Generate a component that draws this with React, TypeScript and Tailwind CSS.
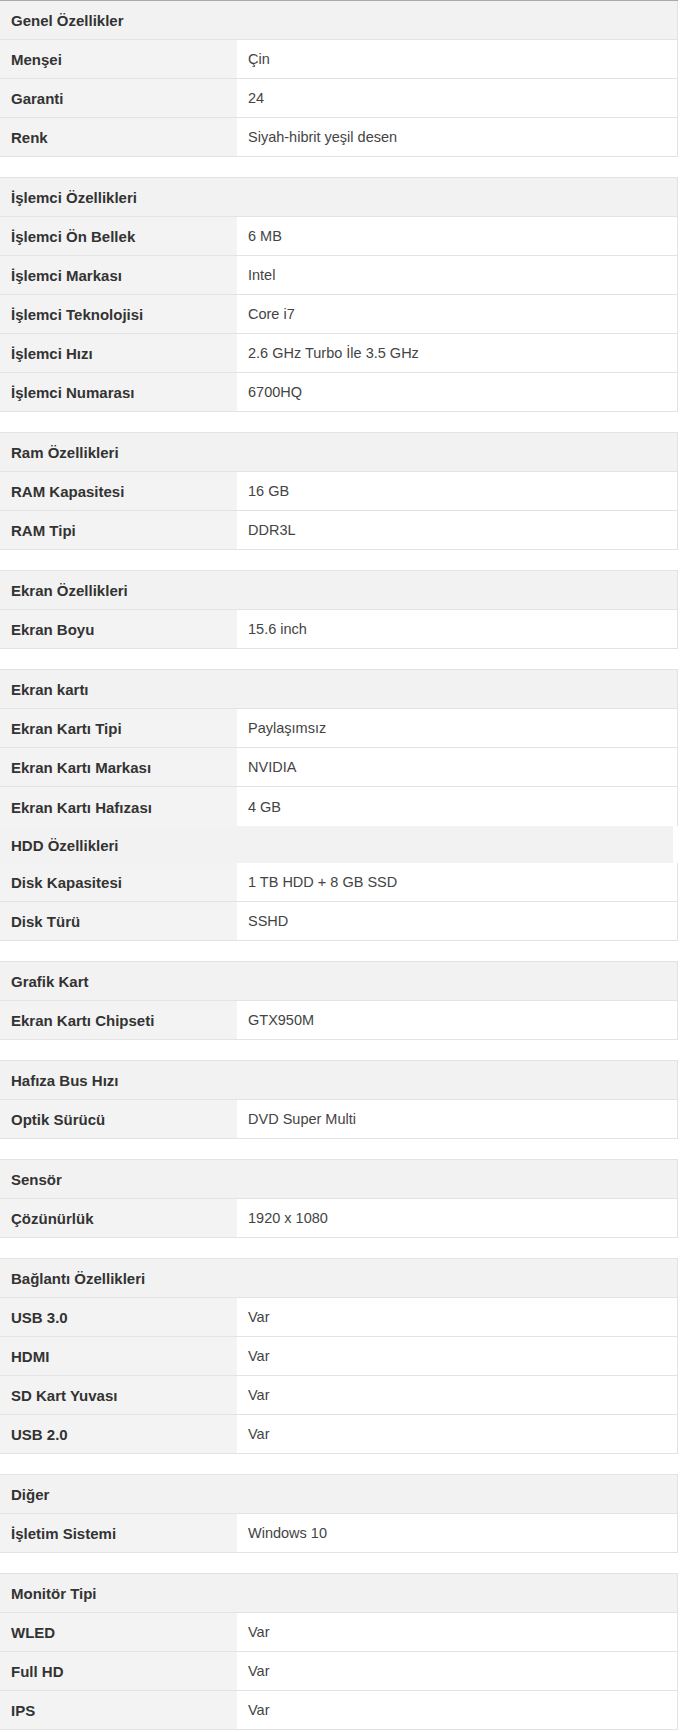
type Row = [string, string];

type Section = {
  title: string;
  rows: Row[];
  // continues directly under the previous section, no gap, no top border
  joined?: boolean;
};

const sections: Section[] = [
  {
    title: 'Genel Özellikler',
    rows: [
      ['Menşei', 'Çin'],
      ['Garanti', '24'],
      ['Renk', 'Siyah-hibrit yeşil desen'],
    ],
  },
  {
    title: 'İşlemci Özellikleri',
    rows: [
      ['İşlemci Ön Bellek', '6 MB'],
      ['İşlemci Markası', 'Intel'],
      ['İşlemci Teknolojisi', 'Core i7'],
      ['İşlemci Hızı', '2.6 GHz Turbo İle 3.5 GHz'],
      ['İşlemci Numarası', '6700HQ'],
    ],
  },
  {
    title: 'Ram Özellikleri',
    rows: [
      ['RAM Kapasitesi', '16 GB'],
      ['RAM Tipi', 'DDR3L'],
    ],
  },
  {
    title: 'Ekran Özellikleri',
    rows: [['Ekran Boyu', '15.6 inch']],
  },
  {
    title: 'Ekran kartı',
    rows: [
      ['Ekran Kartı Tipi', 'Paylaşımsız'],
      ['Ekran Kartı Markası', 'NVIDIA'],
      ['Ekran Kartı Hafızası', '4 GB'],
    ],
  },
  {
    title: 'HDD Özellikleri',
    joined: true,
    rows: [
      ['Disk Kapasitesi', '1 TB HDD + 8 GB SSD'],
      ['Disk Türü', 'SSHD'],
    ],
  },
  {
    title: 'Grafik Kart',
    rows: [['Ekran Kartı Chipseti', 'GTX950M']],
  },
  {
    title: 'Hafıza Bus Hızı',
    rows: [['Optik Sürücü', 'DVD Super Multi']],
  },
  {
    title: 'Sensör',
    rows: [['Çözünürlük', '1920 x 1080']],
  },
  {
    title: 'Bağlantı Özellikleri',
    rows: [
      ['USB 3.0', 'Var'],
      ['HDMI', 'Var'],
      ['SD Kart Yuvası', 'Var'],
      ['USB 2.0', 'Var'],
    ],
  },
  {
    title: 'Diğer',
    rows: [['İşletim Sistemi', 'Windows 10']],
  },
  {
    title: 'Monitör Tipi',
    rows: [
      ['WLED', 'Var'],
      ['Full HD', 'Var'],
      ['IPS', 'Var'],
    ],
  },
];

function SpecTable({ section, first, next }: { section: Section; first: boolean; next?: Section }) {
  const joinedBelow = next?.joined;
  const topBorder = section.joined ? '' : first ? 'border-t border-[#a9a9a9]' : 'border-t border-[#e3e3e3]';
  const spacing = joinedBelow ? '' : 'mb-[20px]';

  return (
    <div className={`w-[678px] ${topBorder} ${spacing}`}>
      <div
        className={`flex items-center pl-[11px] pt-[1px] font-bold text-[15px] text-[#333] bg-[#f2f2f2] ${
          section.joined ? 'h-[37px] w-[673px]' : 'h-[39px] border-b border-r border-[#e3e3e3]'
        }`}
      >
        {section.title}
      </div>
      {section.rows.map(([label, value], i) => {
        const last = i === section.rows.length - 1;
        const noBottom = last && joinedBelow;
        return (
          <div
            key={label}
            className={`flex h-[39px] border-r border-[#e3e3e3] ${noBottom ? 'h-[38px]' : 'border-b'}`}
          >
            <div className="flex w-[237px] shrink-0 items-center bg-[#f3f3f3] pl-[11px] pt-[1px] font-bold text-[15px] text-[#333]">
              {label}
            </div>
            <div className="flex flex-1 items-center bg-white pl-[11px] pt-[1px] text-[14.5px] text-[#444]">
              {value}
            </div>
          </div>
        );
      })}
    </div>
  );
}

export default function App() {
  return (
    <div className="w-[680px] min-h-[1732px] bg-white font-['Liberation_Sans',Arial,sans-serif] leading-[17px]">
      {sections.map((s, i) => (
        <SpecTable key={s.title} section={s} first={i === 0} next={sections[i + 1]} />
      ))}
    </div>
  );
}
